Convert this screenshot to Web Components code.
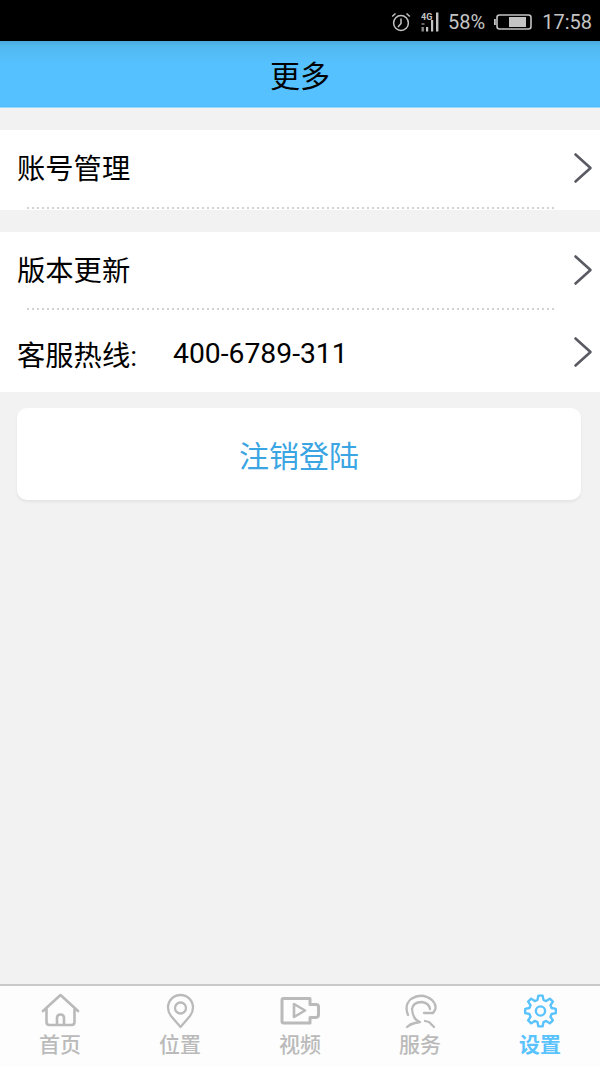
<!DOCTYPE html>
<html lang="zh">
<head>
<meta charset="utf-8">
<title>更多</title>
<style>
    html, body { margin: 0; padding: 0; height: 100%; }
    body {
        width: 600px;
        height: 1067px;
        overflow: hidden;
        display: flex;
        flex-direction: column;
        background: #f2f2f2;
        font-family: Roboto, "Noto Sans CJK SC", sans-serif;
    }
    more-page { flex: 1; }
</style>
</head>
<body>
<status-bar></status-bar>
<app-header>更多</app-header>
<more-page>
    <menu-group>
        <menu-row line height="80" shift="4" text-shift="4">账号管理</menu-row>
    </menu-group>
    <menu-group>
        <menu-row line height="79" shift="3" text-shift="4">版本更新</menu-row>
        <menu-row height="81" shift="-1" text-shift="-2" value="400-6789-311">客服热线:</menu-row>
    </menu-group>
    <logout-button>注销登陆</logout-button>
</more-page>
<tab-bar>
    <tab-item icon="home">首页</tab-item>
    <tab-item icon="pin">位置</tab-item>
    <tab-item icon="video">视频</tab-item>
    <tab-item icon="service">服务</tab-item>
    <tab-item icon="gear" active>设置</tab-item>
</tab-bar>

<script>
// Barra di stato Android
class StatusBar extends HTMLElement {
    constructor() {
        super();
        this.attachShadow({ mode: "open" }).innerHTML = `
            <style>
                :host {
                    display: flex;
                    align-items: center;
                    justify-content: flex-end;
                    height: 41px;
                    box-sizing: border-box;
                    padding: 3px 8px 0 0;
                    background: #000;
                    color: #c4c4c4;
                    font-family: Roboto, sans-serif;
                    font-size: 20px;
                }
                svg { display: block; }
                .alarm { margin-right: 10px; }
                .signal { margin-right: 9px; }
                .pct { margin-right: 9px; }
                .battery { margin-right: 10px; }
            </style>
            <svg class="alarm" width="20" height="20" viewBox="0 0 20 20" fill="none" stroke="#c4c4c4" stroke-width="1.5">
                <circle cx="10" cy="11" r="7.4"/>
                <path d="M10 6.5V11.5L7 15M1.2 4.5L4.5 1.5M18.8 4.5L15.5 1.5"/>
            </svg>
            <svg class="signal" width="18" height="20" viewBox="0 0 18 20">
                <text x="0" y="7.5" font-family="Roboto, sans-serif" font-size="9" font-weight="700" fill="#c4c4c4">4G</text>
                <rect x="0.5" y="11" width="3" height="2" fill="#666"/>
                <rect x="0.5" y="15" width="2.4" height="4.5" fill="#888"/>
                <rect x="5" y="15" width="2.2" height="4.5" fill="#c4c4c4"/>
                <rect x="10" y="8" width="2.2" height="11.5" fill="#c4c4c4"/>
                <rect x="15" y="0.5" width="2.4" height="19" fill="#c4c4c4"/>
            </svg>
            <span class="pct">58%</span>
            <svg class="battery" width="38" height="16" viewBox="0 0 38 16">
                <rect x="0" y="5" width="1.8" height="6" fill="#c4c4c4"/>
                <rect x="3" y="1" width="34" height="14" rx="2.5" fill="none" stroke="#c4c4c4" stroke-width="1.6"/>
                <rect x="15" y="3" width="17" height="10" fill="#c4c4c4"/>
            </svg>
            <span>17:58</span>
        `;
    }
}

class AppHeader extends HTMLElement {
    constructor() {
        super();
        this.attachShadow({ mode: "open" }).innerHTML = `
            <style>
                :host {
                    display: flex;
                    align-items: center;
                    justify-content: center;
                    height: 67px;
                    box-sizing: border-box;
                    background: linear-gradient(#4aa9dc 0, #52b8ee 5px, #55c1ff 22px, #55c1ff 64px, #52bcf8 66px);
                    border-bottom: 1px solid #9adcff;
                    color: #000;
                    font-size: 30px;
                    font-family: Roboto, "Noto Sans CJK SC", sans-serif;
                }
            </style>
            <slot></slot>
        `;
    }
}

class MorePage extends HTMLElement {
    constructor() {
        super();
        this.attachShadow({ mode: "open" }).innerHTML = `
            <style>
                :host {
                    display: flex;
                    flex-direction: column;
                    padding-top: 22px;
                    gap: 22px;
                }
            </style>
            <slot></slot>
        `;
    }
}

class MenuGroup extends HTMLElement {
    constructor() {
        super();
        this.attachShadow({ mode: "open" }).innerHTML = `
            <style>
                :host { display: block; background: #fff; }
            </style>
            <slot></slot>
        `;
    }
}

class MenuRow extends HTMLElement {
    constructor() {
        super();
        this.attachShadow({ mode: "open" });
    }

    connectedCallback() {
        const value = this.getAttribute("value");
        const height = this.getAttribute("height") || "80";
        const shift = Number(this.getAttribute("shift") || 0);
        const textShift = Number(this.getAttribute("text-shift") || 0);
        const dotted = this.hasAttribute("line");
        this.shadowRoot.innerHTML = `
            <style>
                :host {
                    display: flex;
                    align-items: center;
                    height: ${height}px;
                    box-sizing: border-box;
                    padding: ${Math.max(-shift, 0)}px 7px ${Math.max(shift, 0)}px 17px;
                    position: relative;
                    color: #000;
                    font-size: 28.3px;
                    font-family: Roboto, "Noto Sans CJK SC", sans-serif;
                }
                .label, .value {
                    margin-top: ${Math.max(-textShift, 0)}px;
                    margin-bottom: ${Math.max(textShift, 0)}px;
                }
                .label { flex: none; width: 156px; white-space: nowrap; }
                .value { flex: 1; }
                .arrow { display: block; flex: none; margin-left: auto; }
                .line {
                    position: absolute;
                    left: 27px;
                    width: 530px;
                    bottom: 1px;
                    height: 2px;
                    background: repeating-linear-gradient(90deg, #d2d2d2 0 2px, transparent 2px 5px);
                }
            </style>
            <span class="label"><slot></slot></span>
            ${value ? `<span class="value">${value}</span>` : ""}
            <svg class="arrow" width="20" height="32" viewBox="0 0 20 32" fill="none" stroke="#5a5a64" stroke-width="2.6" stroke-linecap="round" stroke-linejoin="round">
                <path d="M2.5 2.5L17.5 16L2.5 29.5"/>
            </svg>
            ${dotted ? `<div class="line"></div>` : ""}
        `;
    }
}

class LogoutButton extends HTMLElement {
    constructor() {
        super();
        this.attachShadow({ mode: "open" }).innerHTML = `
            <style>
                :host {
                    display: flex;
                    align-items: center;
                    justify-content: center;
                    height: 92px;
                    margin: -6px 19px 0 17px;
                    background: #fff;
                    border-radius: 10px;
                    box-shadow: 0 2px 3px rgba(0, 0, 0, 0.06);
                    color: #3aa5e2;
                    font-size: 30px;
                    font-family: Roboto, "Noto Sans CJK SC", sans-serif;
                }
            </style>
            <slot></slot>
        `;
    }
}

class TabBar extends HTMLElement {
    constructor() {
        super();
        this.attachShadow({ mode: "open" }).innerHTML = `
            <style>
                :host {
                    display: grid;
                    grid-template-columns: repeat(5, 120px);
                    height: 83px;
                    box-sizing: border-box;
                    background: #fdfdfd;
                    border-top: 2px solid #c9c9c9;
                }
            </style>
            <slot></slot>
        `;
    }
}

// Ingranaggio a 8 denti, centrato su (20.5, 18)
function gearPath() {
    const point = (deg, radius) => {
        const a = (deg - 90) * Math.PI / 180;
        return (20.5 + radius * Math.cos(a)).toFixed(2) + " " + (18 + radius * Math.sin(a)).toFixed(2);
    };
    const parts = [];
    for (let i = 0; i < 8; i++) {
        const deg = i * 45;
        parts.push(point(deg - 15, 11.5), point(deg - 8, 15.5), point(deg + 8, 15.5), point(deg + 15, 11.5));
    }
    return "M" + parts.join("L") + "Z";
}

const TAB_ICONS = {
    home: `<path d="M3 18L20.5 2L38 18M6.5 15V29Q6.5 32 9.5 32H31.5Q34.5 32 34.5 29V15M17 32V25Q17 21.5 20.5 21.5Q24 21.5 24 25V32" stroke-width="2.6" stroke-linejoin="round" stroke-linecap="round"/>`,
    pin: `<path d="M20.5 34L11 23Q8 19 8 14.5A12.5 12.5 0 0 1 33 14.5Q33 19 30 23Z" stroke-width="2.3" stroke-linejoin="round"/><circle cx="20.5" cy="15" r="5.5" stroke-width="2.3"/>`,
    video: `<path d="M30 5.5H3.5Q2 5.5 2 7V28.5Q2 30 3.5 30H30V24.5H36Q38.5 24 38.5 22V13.5Q38.5 11.5 36 11.5H30Z" stroke-width="3" stroke-linejoin="round"/><path d="M14 11L25 17.5L14 24Z" stroke-width="2.6" stroke-linejoin="round"/>`,
    service: `<path d="M8 22Q4 12 11 6Q22 -1 32 7Q37 12 35 17L33 20H24M12 16Q13 9 22 9Q29 10 30 16M12 16Q13 27 20 29L15 30Q10 31 7 34M25 28L29 29L34 34" stroke-width="2.3" stroke-linecap="round" stroke-linejoin="round"/>`,
    gear: `<path d="${gearPath()}" stroke-width="2.4" stroke-linejoin="round"/><circle cx="20.5" cy="18" r="4.6" stroke-width="2.4"/>`,
};

class TabItem extends HTMLElement {
    constructor() {
        super();
        this.attachShadow({ mode: "open" });
    }

    connectedCallback() {
        const active = this.hasAttribute("active");
        const color = active ? "#5ac3fd" : "#bababa";
        const icon = TAB_ICONS[this.getAttribute("icon")] || "";
        this.shadowRoot.innerHTML = `
            <style>
                :host {
                    display: flex;
                    flex-direction: column;
                    align-items: center;
                    padding-top: 7px;
                    color: ${color};
                    font-size: 21px;
                    line-height: 24px;
                    font-weight: ${active ? 700 : 500};
                    font-family: Roboto, "Noto Sans CJK SC", sans-serif;
                }
                svg { display: block; }
            </style>
            <svg width="41" height="40" viewBox="0 0 41 40" fill="none" stroke="${color}">${icon}</svg>
            <slot></slot>
        `;
    }
}

customElements.define("status-bar", StatusBar);
customElements.define("app-header", AppHeader);
customElements.define("more-page", MorePage);
customElements.define("menu-group", MenuGroup);
customElements.define("menu-row", MenuRow);
customElements.define("logout-button", LogoutButton);
customElements.define("tab-bar", TabBar);
customElements.define("tab-item", TabItem);
</script>
</body>
</html>
